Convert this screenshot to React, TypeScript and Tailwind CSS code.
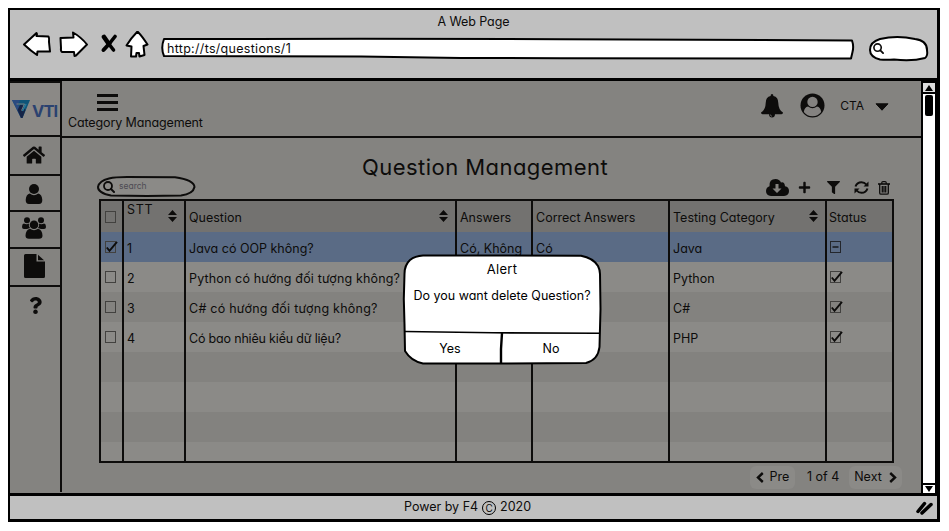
import type { ReactNode } from "react";
import { FaHome, FaQuestion, FaPlus, FaFilter } from "react-icons/fa";

const INK = "#0d0c0b";

/* ---------- browser chrome icons ---------- */

function BackArrow() {
  return (
    <svg width="30" height="28" viewBox="0 0 30 28" fill="#fff" stroke="#000" strokeWidth="2" strokeLinejoin="round">
      <path d="M2 13.500 L14.500 2 Q15.500 3 14.500 5 L26.500 5.500 Q27.500 7 27 11 L28 20.500 L15.500 20.500 L15 24 Q9 20 2 13.500 Z" />
    </svg>
  );
}

function ForwardArrow() {
  return (
    <svg width="30" height="28" viewBox="0 0 30 28" fill="#fff" stroke="#000" strokeWidth="2" strokeLinejoin="round">
      <path d="M1.500 7 L14.500 6.500 L14 1.500 Q22 6 28 13.500 L17 24.500 L15.500 25 L15 21 L3 21 Q1.500 20 2 17 Z" />
    </svg>
  );
}

function StopCross() {
  return (
    <svg width="18" height="22" viewBox="0 0 18 22" fill="none" stroke="#000" strokeLinecap="round">
      <path d="M4 3 L8.500 9.500" strokeWidth="4.600" />
      <path d="M8.500 9.500 L13.500 16" strokeWidth="3.600" />
      <path d="M15 2.500 L9.500 9.500" strokeWidth="3.600" />
      <path d="M9.500 9.500 L3.500 16" strokeWidth="4" />
    </svg>
  );
}

function HomeArrow() {
  return (
    <svg width="24" height="28" viewBox="0 0 24 28" fill="#fff" stroke="#000" strokeWidth="2" strokeLinejoin="round">
      <path d="M12.500 .5 Q17 5 22.500 13.500 L18.500 15 L19.500 24 L14.500 25.500 L14 22 L11.500 22 L11 25.500 L6 25.500 L6.500 15.500 L1.500 14.500 Q6 7 12.500 .5 Z" />
    </svg>
  );
}

function Lens({ size, className }: { size: number; className?: string }) {
  return (
    <svg width={size} height={size} viewBox="0 0 12 12" fill="none" stroke={INK} strokeWidth="1.800" strokeLinecap="round" className={className}>
      <circle cx="5" cy="5" r="4" />
      <path d="M8 8 L11 11" strokeWidth="2" />
    </svg>
  );
}

/* Hand-inked outline that sits behind the content of a field or a dialog. */
function Outline({ w, h, d, fill, stroke = "#000", children }: { w: number; h: number; d: string; fill: string; stroke?: string; children?: ReactNode }) {
  return (
    <svg width={w} height={h} viewBox={`0 0 ${w} ${h}`} className="absolute top-0 left-0 overflow-visible" fill="none" stroke={stroke} strokeWidth="2" strokeLinejoin="round">
      <path d={d} fill={fill} />
      {children}
    </svg>
  );
}

/* ---------- application icons ---------- */

function VtiLogo() {
  return (
    <svg width="18" height="19" viewBox="0 0 18 19" className="shrink-0">
      <path d="M0 0 H18 L10.500 18 H9 Z" fill="#0f5578" />
      <path d="M0 0 H8 L6 4.500 L11 14 L10 18 H9 Z" fill="#2a4a80" />
      <path d="M5.500 10 L9 18 H10.500 L13.500 10 L10.500 5 L8 5 Z" fill="#152447" />
      <path d="M4.500 4 H12.500 L9.500 10.500" fill="none" stroke="#858380" strokeWidth=".9" />
      <path d="M10.500 11 L14 4" fill="none" stroke="#267a9b" strokeWidth="1.500" />
    </svg>
  );
}

function UserIcon() {
  return (
    <svg width="18" height="20" viewBox="0 0 18 20" fill={INK}>
      <circle cx="9" cy="5" r="5" />
      <path d="M4.800 9.500 Q9 12.800 13.200 9.500 Q17 10.200 17.300 16 Q17.300 20 14 20 H4 Q.700 20 .700 16 Q1 10.200 4.800 9.500 Z" />
    </svg>
  );
}

function UsersIcon() {
  return (
    <svg width="24" height="22" viewBox="0 0 24 22" fill={INK}>
      <circle cx="5" cy="3.200" r="3" />
      <circle cx="19" cy="3.200" r="3" />
      <path d="M1.800 6.600 Q5 8 7 6.600 Q6.300 9.500 8 11 L5 12 H2 Q0 12 0 10 Q0 7 1.800 6.600 Z" />
      <path d="M22.200 6.600 Q19 8 17 6.600 Q17.700 9.500 16 11 L19 12 H22 Q24 12 24 10 Q24 7 22.200 6.600 Z" />
      <circle cx="12" cy="7.700" r="4.300" />
      <path d="M8 11.800 Q12 14.500 16 11.800 Q20 12.500 20.500 18.500 Q20.500 21.800 17 21.800 H7 Q3.500 21.800 3.500 18.500 Q4 12.500 8 11.800 Z" />
    </svg>
  );
}

function FileIcon() {
  return (
    <svg width="21" height="24" viewBox="0 0 21 24" fill={INK}>
      <path d="M1.500 0 H12.500 V7.500 H21 V22.500 Q21 24 19.500 24 H1.500 Q0 24 0 22.500 V1.500 Q0 0 1.500 0 Z" />
      <path d="M14 .8 L20 6.200 H14 Z" />
    </svg>
  );
}

function BellIcon() {
  return (
    <svg width="22" height="24" viewBox="0 0 22 24" fill={INK}>
      <path d="M11 0 Q12.400 0 12.400 2 Q17.300 3 17.300 9 Q17.500 16 22 18.500 Q22 20.200 20.500 20.200 H14 Q13.800 23.500 11 23.500 Q8.200 23.500 8 20.200 H1.500 Q0 20.200 0 18.500 Q4.500 16 4.700 9 Q4.700 3 9.600 2 Q9.600 0 11 0 Z" />
      <path d="M9.300 20.500 Q9.500 22.200 11 22.300" fill="none" stroke="#848280" strokeWidth=".7" />
    </svg>
  );
}

function AvatarIcon() {
  return (
    <svg width="25" height="25" viewBox="0 0 25 25">
      <circle cx="12.500" cy="12.500" r="12" fill={INK} />
      <path d="M3.800 19 Q4.500 14 8 13.500 Q12.500 17 17 13.500 Q20.500 14 21.200 19 Q18 23.200 12.500 23.200 Q7 23.200 3.800 19 Z" fill="#848280" />
      <circle cx="12.500" cy="8.900" r="5.200" fill="#848280" />
    </svg>
  );
}

function Caret() {
  return (
    <svg width="14" height="8" viewBox="0 0 14 8" fill={INK} stroke={INK} strokeLinejoin="round">
      <path d="M1 .8 H13 L7 7.200 Z" />
    </svg>
  );
}

function CloudDownload() {
  return (
    <svg width="23" height="17" viewBox="0 0 23 17">
      <path d="M5 17 Q0 16.500 0 12 Q0 8.500 3.500 7.200 Q3 0 9.500 0 Q13.500 0 15 3.500 Q18.500 2.500 19 7.200 Q23 8 23 12 Q23 16.500 18 17 Z" fill={INK} />
      <path d="M9.500 5 H12.500 V9.500 H15.500 L11 14 L6.500 9.500 H9.500 Z" fill="#858380" />
    </svg>
  );
}

function RefreshIcon() {
  return (
    <svg width="15" height="13" viewBox="0 0 15 13" fill="none" stroke={INK} strokeWidth="2">
      <path d="M1.500 5.500 Q3 1.200 7.500 1.200 Q10.500 1.200 12.300 3.500" />
      <path d="M13.500 7.500 Q12 11.800 7.500 11.800 Q4.500 11.800 2.700 9.500" />
      <path d="M14.500 .5 V5.500 H9.500 Z M.5 12.500 V7.500 H5.500 Z" fill={INK} stroke="none" />
    </svg>
  );
}

function TrashIcon() {
  return (
    <svg width="12" height="14" viewBox="0 0 12 14" fill="none" stroke={INK}>
      <path d="M0 3 H12" strokeWidth="1.600" />
      <path d="M3.800 3 V1.500 Q3.800 .6 5 .6 H7 Q8.200 .6 8.200 1.500 V3" strokeWidth="1.200" />
      <path d="M1.700 3 V12 Q1.700 13.200 3 13.200 H9 Q10.300 13.200 10.300 12 V3 M4.300 5 V11.500 M6 5 V11.500 M7.700 5 V11.500" strokeWidth="1.300" />
    </svg>
  );
}

function SortIcon() {
  return (
    <svg width="9" height="12" viewBox="0 0 9 12" fill={INK}>
      <path d="M4.500 0 L9 5 H0 Z M0 7 H9 L4.500 12 Z" />
    </svg>
  );
}

function Chevron({ flip = false }: { flip?: boolean }) {
  return (
    <svg width="8" height="11" viewBox="0 0 8 11" fill="none" stroke={INK} strokeWidth="2.400" className={flip ? "rotate-180" : ""}>
      <path d="M6.800 1 L2 5.500 L6.800 10" />
    </svg>
  );
}

function Check({ state }: { state: "off" | "on" | "mixed" }) {
  return (
    <svg width="14" height="14" viewBox="0 0 14 14" fill="none" className="-mt-[3px] block shrink-0 overflow-visible">
      <rect x="1.500" y="1.500" width="10" height="11" stroke={state === "mixed" ? "#23262c" : "#42413f"} strokeWidth="1" />
      {state === "on" && <path d="M2.800 7.500 L5.500 10.800 L13 1.800" stroke={INK} strokeWidth="1.900" />}
      {state === "mixed" && <path d="M3.500 7 H9.500" stroke={INK} strokeWidth="1.300" />}
    </svg>
  );
}

/* ---------- page parts ---------- */

function Chrome() {
  return (
    <header className="flex h-[71px] flex-col border-b-3 border-black bg-[#c0c0c0]">
      <div className="h-[18px] pt-[4px] text-center text-[12.500px] leading-4 tracking-[-0.1px]">A Web Page</div>
      <div className="flex h-[34px] items-center pl-[12px]">
        <BackArrow />
        <div className="ml-[7px]"><ForwardArrow /></div>
        <div className="ml-[11px]"><StopCross /></div>
        <div className="ml-[7px]"><HomeArrow /></div>
        <div className="relative mt-[7px] ml-[12px] flex h-[21px] w-[693px] items-center pl-[6px] text-[12.500px] tracking-[0.3px]">
          <Outline w={693} h={21} fill="#fff" d="M3 1 L200 .8 L400 1.200 L691 2.500 Q693 8 691.500 14 L690 20.500 L400 20.200 L300 20 L200 18.500 L3 18 Q-.500 10 3 1 Z" />
          <span className="relative mt-px">http://ts/questions/1</span>
        </div>
        <div className="relative mt-[7px] ml-[15px] flex h-[25px] w-[60px] items-center pl-[4px]">
          <Outline w={60} h={25} fill="#fff" d="M1 14 Q1 6 11 3 Q28 -1 46 3 Q58 4.500 58 14 Q59 20 56 22 Q43 25.500 25 23.500 Q17 24 11 23.500 Q1 21 1 14 Z" />
          <Lens size={11} className="relative" />
        </div>
      </div>
    </header>
  );
}

function SideItem({ h, children }: { h: string; children: ReactNode }) {
  return <div className={`flex w-full items-center justify-center border-b-2 border-[#0d0c0b] ${h}`}>{children}</div>;
}

function Sidebar() {
  return (
    <nav className="flex h-[411px] w-[52px] shrink-0 flex-col border-r-2 border-[#0d0c0b]">
      <div className="flex h-[56px] items-center gap-[2px] border-t-2 border-b-2 border-[#0d0c0b] bg-[#8b8986] pl-[2px]">
        <VtiLogo />
        <span className="mt-[5px] text-[16.500px] leading-none font-bold tracking-[-0.9px] text-[#2b4270]">VTI</span>
      </div>
      <SideItem h="h-[39px]"><FaHome size={22} color={INK} className="-mt-px -ml-[2px]" /></SideItem>
      <SideItem h="h-[36px]"><div className="mt-px -ml-[2px]"><UserIcon /></div></SideItem>
      <SideItem h="h-[37px]"><div className="-mt-[3px] -ml-[2px]"><UsersIcon /></div></SideItem>
      <SideItem h="h-[38px]"><div className="-mt-[2px] -ml-[2px]"><FileIcon /></div></SideItem>
      <div className="flex h-[36px] items-center justify-center"><FaQuestion size={17} color={INK} /></div>
    </nav>
  );
}

function TopBar() {
  return (
    <div className="flex h-[57px] justify-between border-b-2 border-[#0d0c0b] pr-[32px] pl-[6px]">
      <div>
        <div className="mt-[13px] ml-[29px] flex w-[21px] flex-col gap-[4px]">
          <span className="h-[3px] bg-[#0d0c0b]" />
          <span className="h-[3px] bg-[#0d0c0b]" />
          <span className="h-[3px] bg-[#0d0c0b]" />
        </div>
        <div className="mt-[4px] text-[12.500px] leading-4 tracking-[-0.130px] whitespace-nowrap">Category Management</div>
      </div>
      <div className="mt-[12px] flex h-[25px] items-center">
        <BellIcon />
        <div className="ml-[17px]"><AvatarIcon /></div>
        <span className="mr-[11px] ml-[15px] text-[12px]">CTA</span>
        <div className="mt-[2px]"><Caret /></div>
      </div>
    </div>
  );
}

const GRID = "grid grid-cols-[23px_62px_271px_76px_137px_157px_1fr]";

function Cell({ last, children }: { last?: boolean; children?: ReactNode }) {
  return <div className={`flex items-center overflow-hidden pt-[3px] whitespace-nowrap ${last ? "pl-[2px]" : "border-r-2 border-[#0d0c0b] pl-[3px]"}`}>{children}</div>;
}

type Row = { n: string; q: string; tracking: string; a: string; c: string; t: string; bg: string; on: boolean };

const ROWS: Row[] = [
  { n: "1", q: "Java có OOP không?", tracking: "tracking-[0px]", a: "Có, Không", c: "Có", t: "Java", bg: "bg-[#5a6b85]", on: true },
  { n: "2", q: "Python có hướng đối tượng không?", tracking: "tracking-[0.150px]", a: "", c: "", t: "Python", bg: "bg-[#8b8a87]", on: false },
  { n: "3", q: "C# có hướng đối tượng không?", tracking: "tracking-[0.250px]", a: "", c: "", t: "C#", bg: "bg-[#83827f]", on: false },
  { n: "4", q: "Có bao nhiêu kiểu dữ liệu?", tracking: "tracking-[-0.180px]", a: "", c: "", t: "PHP", bg: "bg-[#8b8a87]", on: false },
];

const BLANKS = ["bg-[#83827f] h-[30px]", "bg-[#8b8a87] h-[30px]", "bg-[#83827f] h-[30px]", "bg-[#8b8a87] h-[19px]"];

function QuestionTable() {
  return (
    <div className="ml-[37px] w-[795px] border-2 border-[#0d0c0b] text-[12.500px]">
      <div className={`${GRID} h-[31px] bg-[#737270]`}>
        <Cell><Check state="off" /></Cell>
        <Cell>
          <span className="-mt-[16px] grow tracking-[0.700px]">STT</span>
          <span className="mt-[-4px] mr-[7px]"><SortIcon /></span>
        </Cell>
        <Cell><span className="grow">Question</span><span className="mt-[-4px] mr-[7px]"><SortIcon /></span></Cell>
        <Cell>Answers</Cell>
        <Cell>Correct Answers</Cell>
        <Cell><span className="grow">Testing Category</span><span className="mt-[-4px] mr-[7px]"><SortIcon /></span></Cell>
        <Cell last>Status</Cell>
      </div>
      {ROWS.map((r) => (
        <div key={r.n} className={`${GRID} h-[30px] ${r.bg}`}>
          <Cell><Check state={r.on ? "on" : "off"} /></Cell>
          <Cell><span className="mt-px">{r.n}</span></Cell>
          <Cell><span className={`mt-px ${r.tracking}`}>{r.q}</span></Cell>
          <Cell><span className="mt-px">{r.a}</span></Cell>
          <Cell><span className="mt-px">{r.c}</span></Cell>
          <Cell><span className="mt-px">{r.t}</span></Cell>
          <Cell last><Check state={r.on ? "mixed" : "on"} /></Cell>
        </div>
      ))}
      {BLANKS.map((b, i) => (
        <div key={i} className={`${GRID} ${b}`}>
          <Cell /><Cell /><Cell /><Cell /><Cell /><Cell /><Cell last />
        </div>
      ))}
    </div>
  );
}

function Pager() {
  return (
    <div className="mt-[2px] flex h-[24px] items-center justify-end pr-[19px] text-[12.500px]">
      <div className="flex h-[23px] w-[45px] items-center justify-center gap-[6px] rounded-md bg-[#8b8a87]"><Chevron />Pre</div>
      <span className="ml-[12px] w-[32px] whitespace-nowrap">1 of 4</span>
      <div className="ml-[10px] flex h-[23px] w-[53px] items-center justify-center gap-[7px] rounded-md bg-[#8b8a87]">Next<Chevron flip /></div>
    </div>
  );
}

function Scrollbar() {
  return (
    <div className="flex h-[414px] w-[16px] shrink-0 flex-col items-center border-x-2 border-t-2 border-black bg-white">
      <div className="flex h-[11px] w-full items-center justify-center border-b-2 border-black bg-[#ddd]">
        <svg width="8" height="6" viewBox="0 0 8 6"><path d="M4 0 L8 6 H0 Z" /></svg>
      </div>
      <div className="mt-px h-[21px] w-[8px] rounded-[2px] bg-black" />
      <div className="grow" />
      <div className="flex h-[12px] w-full items-center justify-center border-y-2 border-black">
        <svg width="8" height="6" viewBox="0 0 8 6"><path d="M0 0 H8 L4 6 Z" /></svg>
      </div>
    </div>
  );
}

function AlertDialog() {
  return (
    <div className="absolute top-[254px] left-[403px] flex h-[111px] w-[198px] flex-col text-center text-black">
      <Outline w={198} h={111} fill="#fff" d="M1.500 20 Q1.500 11 7 6 Q12 2 20 1.500 L90 1.500 L178 1.800 Q190 4 195 12 Q197 16 197 20 L197.500 55 L196.500 93 Q195 106 183 109 L100 109.500 L20 109.500 Q8 107 2 97 L1.500 70 L.8 45 Z">
        <path d="M2 77.500 L90 78.800 L197 79.200" strokeWidth="1.600" />
        <path d="M99 79 L98 95 L98 109" strokeWidth="2.400" />
      </Outline>
      <div className="relative pt-[7px] text-[13px] leading-4 tracking-[0.3px]">Alert</div>
      <div className="relative mt-[11px] text-[12.500px] leading-4 whitespace-nowrap">Do you want delete Question?</div>
      <div className="relative mt-auto flex h-[33px] text-[12.500px] leading-[33px]">
        <div className="w-[98px] pr-[4px]">Yes</div>
        <div className="grow">No</div>
      </div>
    </div>
  );
}

export default function App() {
  return (
    <div className="relative h-[531px] w-[949px] overflow-hidden bg-white pt-[8px] pl-[8px] font-['Inter','Noto_Sans',sans-serif] text-[#0d0c0b] [font-feature-settings:'cv11']">
      <div className="flex h-[514px] w-[932px] flex-col border-2 border-r-3 border-b-3 border-black bg-[#848380]">
        <Chrome />
        <div className="flex h-[412px]">
          <Sidebar />
          <main className="flex grow flex-col">
            <TopBar />
            <h1 className="mt-[15px] h-[27px] pl-[300px] text-[22px] leading-[28px] tracking-[0.450px] whitespace-nowrap">Question Management</h1>
            <div className="flex h-[19px] items-start justify-between pr-[31px] pl-[35px]">
              <div className="relative -mt-[4px] flex h-[21px] w-[99px] items-center gap-[4px] pl-[6px]">
                <Outline w={99} h={21} stroke={INK} fill="#8b8a87" d="M1 11 Q2 5 12 2.500 Q18 1 30 1 L78 1.300 Q97 4 97.500 11 Q96 18 84 19.500 L50 20 L14 19.500 Q1 17 1 11 Z" />
                <Lens size={12} className="relative" />
                <span className="relative text-[8.500px] text-[#4d4b53]">search</span>
              </div>
              <div className="-mt-px flex items-center">
                <CloudDownload />
                <FaPlus size={13} color={INK} className="ml-[9px]" />
                <FaFilter size={13} color={INK} className="ml-[16px]" />
                <span className="ml-[14px]"><RefreshIcon /></span>
                <span className="ml-[9px]"><TrashIcon /></span>
              </div>
            </div>
            <QuestionTable />
            <Pager />
          </main>
          <Scrollbar />
        </div>
        <footer className="flex grow items-center border-t-3 border-black bg-[#c0c0c0] pr-[4px] text-[12.500px]">
          <span className="ml-[394px] flex items-center gap-[4px]">
            Power by F4 <span className="flex size-[14px] items-center justify-center rounded-full border border-black text-[10px] leading-none">C</span> 2020
          </span>
          <svg width="17" height="14" viewBox="0 0 17 14" stroke="#000" strokeWidth="3.500" strokeLinecap="round" className="ml-auto">
            <path d="M2 10.500 L8.500 2.500 M6 12 L15 3.500" />
          </svg>
        </footer>
      </div>
      <AlertDialog />
    </div>
  );
}
